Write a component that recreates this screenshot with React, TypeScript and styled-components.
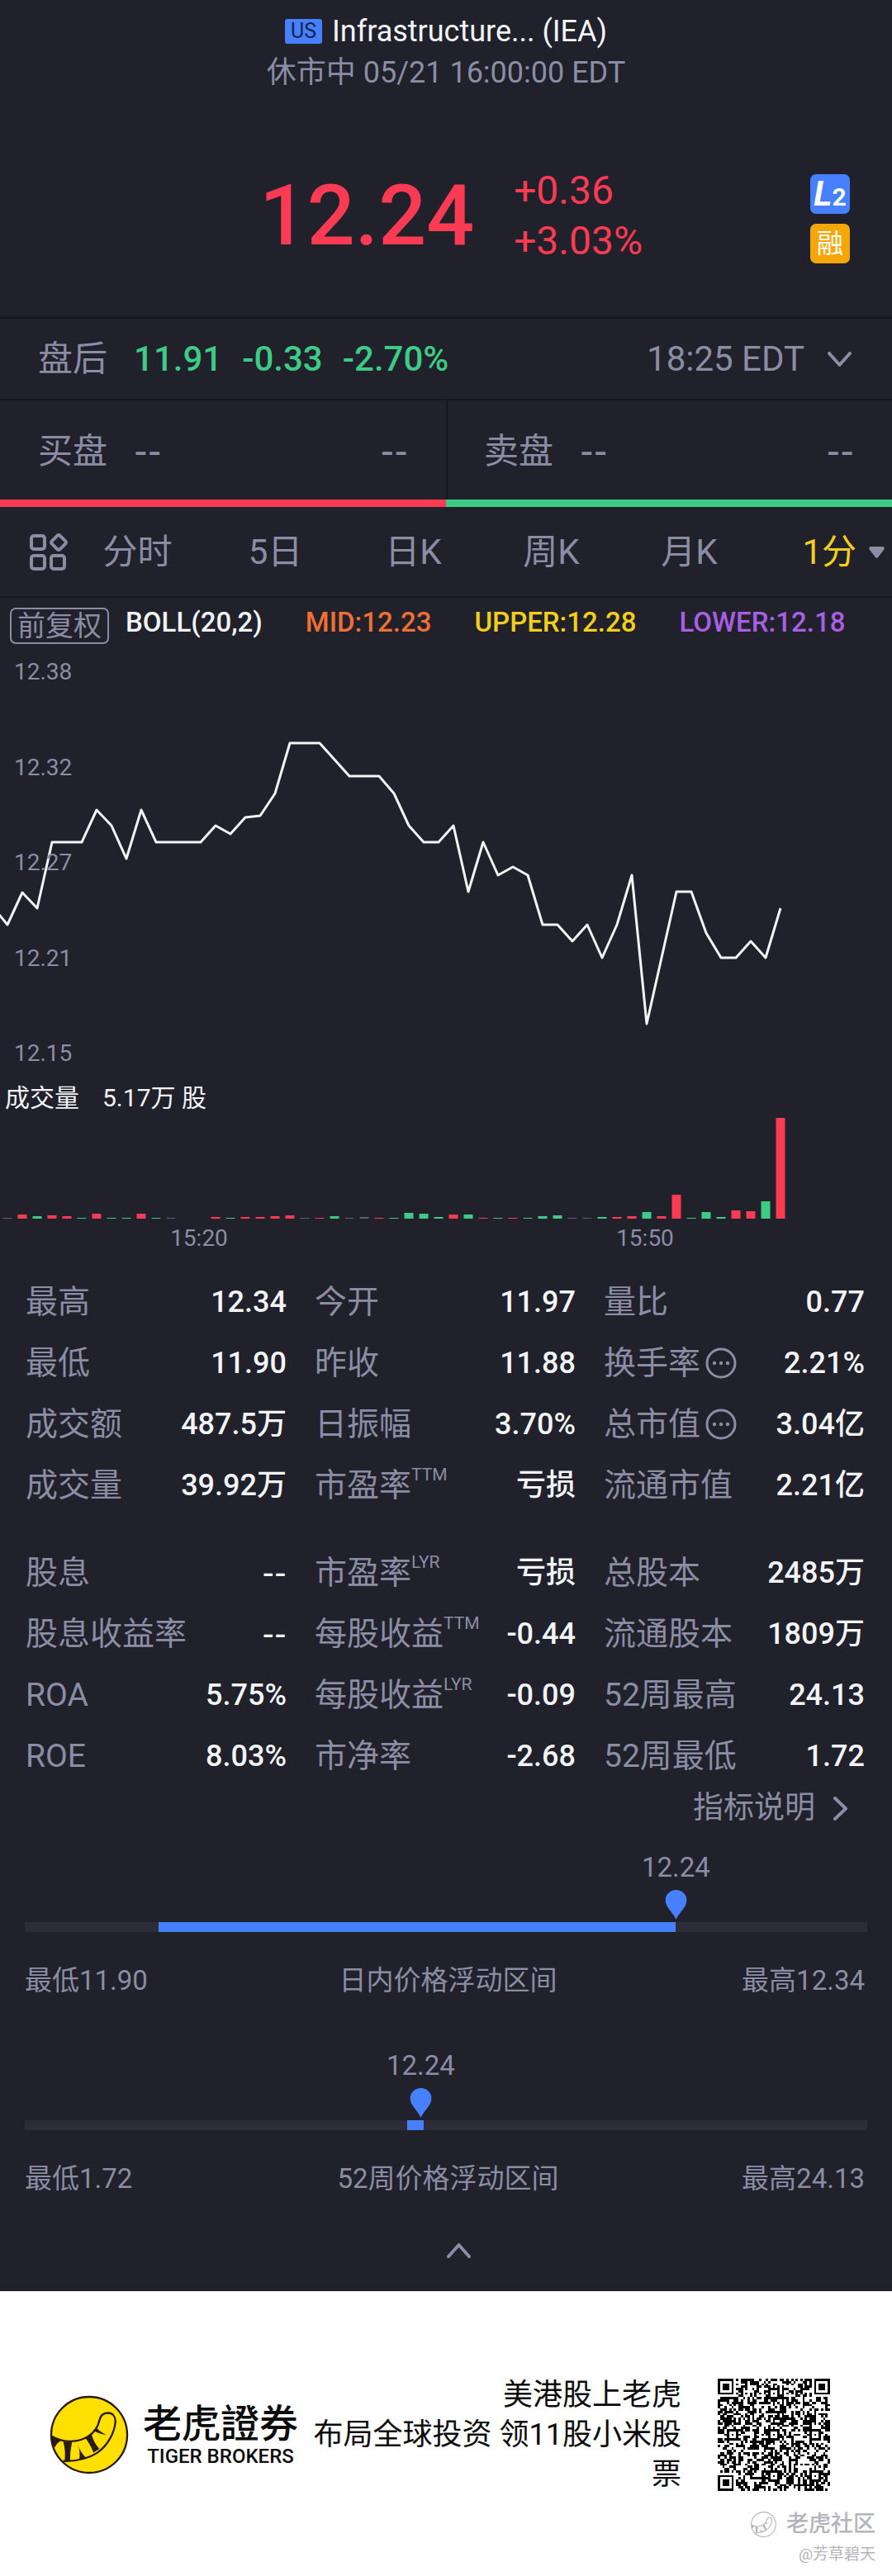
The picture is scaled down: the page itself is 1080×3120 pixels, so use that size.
import React from "react";
import styled, { createGlobalStyle } from "styled-components";

const c = {
  bg: "#20212a",
  line: "#15161e",
  muted: "#8b8da5",
  text: "#f3f4f8",
  red: "#fb3a53",
  green: "#3dcb86",
  blue: "#4680ff",
  amber: "#f5a70a",
  yellow: "#f2cf1d",
  orange: "#ee7034",
  purple: "#a95fe3",
  track: "#2c2d39",
};

const GlobalStyle = createGlobalStyle`
  *, *::before, *::after { box-sizing: border-box; }
  body {
    margin: 0;
    background: #fff;
    font-family: Roboto, "Noto Sans CJK SC", sans-serif;
  }
  button {
    margin: 0;
    padding: 0;
    border: 0;
    background: none;
    color: inherit;
    font: inherit;
    cursor: pointer;
  }
  svg { display: block; flex: none; }
  h1, p, dl, dd, dt { margin: 0; font-weight: inherit; }
`;

const Quote = styled.main`
  background: ${c.bg};
  color: ${c.muted};
`;

/* ---------- header ---------- */

const Header = styled.header`
  padding: 14px 0 62px;
  border-bottom: 2px solid ${c.line};
`;

const Title = styled.h1`
  display: flex;
  justify-content: center;
  align-items: center;
  gap: 12px;
  font-size: 36px;
  line-height: 48px;
  color: ${c.text};
`;

const Market = styled.span`
  width: 45px;
  border-radius: 3px;
  background: ${c.blue};
  color: #17234d;
  font-size: 25px;
  line-height: 30px;
  text-align: center;
`;

const Session = styled.p`
  margin-top: 2px;
  font-size: 36px;
  line-height: 48px;
  text-align: center;
`;

const PriceRow = styled.div`
  display: grid;
  grid-template-columns: 1fr auto 1fr;
  align-items: center;
  margin-top: 88px;
`;

const Price = styled.div`
  grid-column: 2;
  display: flex;
  align-items: center;
  gap: 48px;
  padding-left: 12px;
  color: ${c.red};
`;

const Last = styled.strong`
  font-size: 102px;
  line-height: 112px;
  font-weight: 500;
`;

const Change = styled.div`
  font-size: 48px;
  line-height: 61px;
`;

const Badges = styled.div`
  display: flex;
  flex-direction: column;
  align-items: flex-end;
  gap: 12px;
  padding: 8px 51px 0 0;
`;

const Badge = styled.button<{ $color: string }>`
  display: flex;
  justify-content: center;
  align-items: baseline;
  width: 48px;
  height: 48px;
  border-radius: 7px;
  background: ${(p) => p.$color};
  color: #fff;
  font-size: 32px;
  line-height: 48px;
`;

const BigL = styled.b`
  font-size: 42px;
  font-style: italic;
`;

const SmallTwo = styled.b`
  font-size: 30px;
`;

/* ---------- quote rows ---------- */

const AfterHours = styled.button`
  display: flex;
  align-items: center;
  width: 100%;
  height: 99px;
  padding: 0 49px 0 46px;
  border-bottom: 2px solid ${c.line};
  font-size: 42px;
  line-height: 56px;
`;

const AfterFigures = styled.span`
  display: flex;
  gap: 24px;
  margin-left: 32px;
  color: ${c.green};
  font-weight: 500;
`;

const AfterTime = styled.span`
  display: flex;
  align-items: center;
  gap: 28px;
  margin-left: auto;
`;

const Depth = styled.section`
  display: grid;
  grid-template-columns: 1fr 1fr;
`;

const DepthSide = styled.div<{ $color: string }>`
  display: flex;
  align-items: center;
  height: 129px;
  padding: 4px 46px 0;
  border-bottom: 9px solid ${(p) => p.$color};
  font-size: 42px;
  line-height: 56px;

  & + & {
    box-shadow: inset 2px 0 ${c.line};
  }
`;

const Dashes = styled.span`
  font-family: Inter, sans-serif;
  font-size: 36px;
  font-weight: 600;
  margin-left: 32px;

  & + & {
    margin-left: auto;
  }
`;

/* ---------- period tabs ---------- */

const Tabs = styled.nav`
  display: flex;
  align-items: center;
  height: 110px;
  padding-top: 2px;
  border-bottom: 2px solid ${c.line};
`;

const LayoutButton = styled.button`
  width: 83px;
  padding-left: 36px;
`;

const Tab = styled.button<{ $active?: boolean }>`
  flex: ${(p) => (p.$active ? "0 0 162px" : "1")};
  display: flex;
  justify-content: ${(p) => (p.$active ? "flex-end" : "center")};
  align-items: center;
  gap: 15px;
  padding-right: ${(p) => (p.$active ? 9 : 0)}px;
  color: ${(p) => (p.$active ? c.yellow : c.muted)};
  font-size: 42px;
  line-height: 56px;
`;

/* ---------- chart ---------- */

const Legend = styled.div`
  display: flex;
  align-items: flex-start;
  gap: 52px;
  padding: 12px 12px 0;
  font-size: 33px;
  line-height: 35px;
  font-weight: 500;
`;

const LegendLead = styled.span`
  display: flex;
  gap: 20px;
  color: ${c.text};
`;

const Adjust = styled.button`
  padding: 0 7px;
  border: 2px solid ${c.muted};
  border-radius: 7px;
  color: ${c.muted};
  font-size: 34px;
  font-weight: 400;
  line-height: 40px;
`;

const LegendItem = styled.span<{ $color: string }>`
  color: ${(p) => p.$color};
`;

const Plot = styled.div`
  position: relative;
  height: 514px;
`;

const PriceLine = styled.svg`
  width: 100%;
  height: 100%;
`;

const Scale = styled.div`
  position: absolute;
  inset: 0 auto 0 17px;
  display: flex;
  flex-direction: column;
  justify-content: space-between;
  padding: 16px 0 0;
  font-size: 28px;
  line-height: 36px;
`;

const VolumeTitle = styled.p`
  display: flex;
  gap: 28px;
  padding: 18px 6px 2px;
  color: ${c.text};
  font-size: 30px;
  line-height: 36px;
`;

const VolumeBars = styled.svg`
  width: 100%;
  height: 126px;
`;

const TimeAxis = styled.div`
  display: grid;
  grid-template-columns: 482fr 598fr;
  padding-top: 6px;
  font-size: 28px;
  line-height: 36px;
  text-align: center;
`;

/* ---------- indicators ---------- */

const StatsArea = styled.section`
  padding-top: 22px;
`;

const Stats = styled.dl`
  display: grid;
  grid-template-columns: repeat(3, 1fr);
  column-gap: 34px;
  padding: 0 33px 0 31px;

  & + & {
    margin-top: 32px;
  }
`;

const Stat = styled.div`
  display: flex;
  justify-content: space-between;
  align-items: center;
  height: 74px;
  white-space: nowrap;
`;

const StatName = styled.dt`
  display: flex;
  align-items: center;
  gap: 6px;
  font-size: 39px;
  line-height: 56px;
`;

const StatValue = styled.dd`
  color: ${c.text};
  font-size: 36px;
  line-height: 56px;
  font-weight: 500;
`;

const ValueDashes = styled(Dashes)`
  margin: 0;
  font-size: 32px;
`;

const Sup = styled.sup`
  align-self: flex-start;
  margin-left: -6px;
  font-size: 21px;
  line-height: 30px;
`;

const Explain = styled.button`
  display: flex;
  align-items: center;
  gap: 22px;
  margin: 0 53px 0 auto;
  font-size: 37px;
  line-height: 52px;
`;

/* ---------- ranges ---------- */

const Range = styled.section`
  padding: 112px 30px 0;

  & + & {
    padding-top: 145px;
  }
`;

const Track = styled.div`
  position: relative;
  height: 12px;
  background: ${c.track};
`;

const Fill = styled.div`
  height: 100%;
  background: ${c.blue};
`;

const Marker = styled.div`
  position: absolute;
  bottom: 15px;
  display: flex;
  flex-direction: column;
  align-items: center;
  gap: 7px;
  transform: translateX(-50%);
  font-size: 33px;
  line-height: 40px;
`;

const RangeText = styled.div`
  display: flex;
  justify-content: space-between;
  padding: 35px 3px 0 0;
  font-size: 33px;
  line-height: 48px;
`;

const RangeEnd = styled.span`
  flex: 1;

  &:last-child {
    text-align: right;
  }
`;

const RangeName = styled.span`
  padding-left: 8px;
`;

const Collapse = styled.button`
  display: block;
  margin: 0 auto;
  padding: 54px 0 40px 30px;
`;

/* ---------- footer ---------- */

const Footer = styled.footer`
  padding: 102px 0 12px;
  background: #fff;
  color: #0c0c0c;
`;

const Promo = styled.div`
  display: flex;
  align-items: center;
  padding: 0 75px 0 60px;
`;

const Brand = styled.div`
  margin-left: 17px;
  font-family: Roboto, "Noto Sans CJK TC", sans-serif;
  font-size: 47px;
  line-height: 52px;
  font-weight: 500;
  text-align: center;
  white-space: nowrap;
`;

const BrandLatin = styled.div`
  font-size: 24px;
  line-height: 26px;
`;

const Slogan = styled.p`
  flex: 1;
  margin-right: 44px;
  font-size: 36px;
  line-height: 48px;
  text-align: right;
  white-space: nowrap;
`;

const Watermark = styled.div`
  display: flex;
  flex-direction: column;
  align-items: flex-end;
  gap: 6px;
  padding: 18px 20px 0 0;
  color: #b4b4ba;
  font-size: 19px;
  line-height: 26px;
`;

const Community = styled.div`
  display: flex;
  align-items: center;
  gap: 12px;
  font-size: 27px;
  line-height: 36px;
  font-weight: 500;
`;

/* ---------- data ---------- */

const STEP = 18;
const OFFSET = 9;

const closes = [
  340, 301, 320, 240, 240, 240, 201, 220, 260, 201, 240, 240, 240, 240, 220,
  230, 210, 208, 181, 120, 120, 120, 140, 160, 160, 160, 181, 220, 240, 240,
  220, 300, 240, 280, 270, 280, 340, 340, 360, 340, 380, 340, 280, 460, 380,
  300, 300, 350, 380, 380, 360, 380, 320,
];

const volumes =
  "n1 r5 g3 r4 r3 g1 r6 g1 g1 r6 g1 n1 n0 n0 r2 g1 r2 r2 r3 r4 n1 r1 g3 n1 n2 r1 g1 g7 g6 g2 r5 g5 r1 g1 r1 g1 g3 g4 n1 n1 g2 r2 r3 g8 r3 r29 g1 g8 g2 r10 r9 g21 r122"
    .split(" ")
    .map((v) => ({ tone: v[0], size: Number(v.slice(1)) }));

const tones: Record<string, string> = { r: c.red, g: c.green, n: "#5c5e70" };

type Item = { name: string; value: string; sup?: string; info?: boolean };

const daily: Item[] = [
  { name: "最高", value: "12.34" },
  { name: "今开", value: "11.97" },
  { name: "量比", value: "0.77" },
  { name: "最低", value: "11.90" },
  { name: "昨收", value: "11.88" },
  { name: "换手率", value: "2.21%", info: true },
  { name: "成交额", value: "487.5万" },
  { name: "日振幅", value: "3.70%" },
  { name: "总市值", value: "3.04亿", info: true },
  { name: "成交量", value: "39.92万" },
  { name: "市盈率", value: "亏损", sup: "TTM" },
  { name: "流通市值", value: "2.21亿" },
];

const fundamentals: Item[] = [
  { name: "股息", value: "--" },
  { name: "市盈率", value: "亏损", sup: "LYR" },
  { name: "总股本", value: "2485万" },
  { name: "股息收益率", value: "--" },
  { name: "每股收益", value: "-0.44", sup: "TTM" },
  { name: "流通股本", value: "1809万" },
  { name: "ROA", value: "5.75%" },
  { name: "每股收益", value: "-0.09", sup: "LYR" },
  { name: "52周最高", value: "24.13" },
  { name: "ROE", value: "8.03%" },
  { name: "市净率", value: "-2.68" },
  { name: "52周最低", value: "1.72" },
];

/* ---------- drawings ---------- */

const Chevron = ({ d, w, h }: { d: string; w: number; h: number }) => (
  <svg width={w} height={h} viewBox={`0 0 ${w} ${h}`} fill="none" stroke={c.muted} strokeWidth="4" strokeLinecap="round" strokeLinejoin="round" aria-hidden="true">
    <path d={d} />
  </svg>
);

const LayoutIcon = () => (
  <svg width="46" height="46" viewBox="0 0 46 46" fill="none" stroke={c.muted} strokeWidth="4" strokeLinejoin="round" aria-hidden="true">
    <rect x="2" y="3" width="16" height="16" rx="3" />
    <rect x="2" y="27" width="16" height="16" rx="3" />
    <rect x="26" y="27" width="16" height="16" rx="3" />
    <path d="M33.3 2.8 26.8 9.3a2.4 2.4 0 0 0 0 3.4l6.5 6.5a2.4 2.4 0 0 0 3.4 0l6.5-6.5a2.4 2.4 0 0 0 0-3.4l-6.5-6.5a2.4 2.4 0 0 0-3.4 0Z" />
  </svg>
);

const InfoIcon = () => (
  <svg width="38" height="38" viewBox="0 0 38 38" aria-hidden="true">
    <circle cx="19" cy="19" r="17" fill="none" stroke={c.muted} strokeWidth="3" />
    <g fill={c.muted}>
      <circle cx="11" cy="19" r="2.2" />
      <circle cx="19" cy="19" r="2.2" />
      <circle cx="27" cy="19" r="2.2" />
    </g>
  </svg>
);

const Pin = () => (
  <svg width="26" height="36" viewBox="0 0 26 36" aria-hidden="true">
    <path d="M13 36C10 28 0 21 0 12.5a13 12.5 0 0 1 26 0C26 21 16 28 13 36Z" fill={c.blue} />
  </svg>
);

const TigerLogo = ({ size, body, ink, stroke }: { size: number; body: string; ink: string; stroke: number }) => (
  <svg width={size} height={size} viewBox="58 54 290 290" aria-hidden="true">
    <circle cx="203" cy="199" r="139" fill={body} stroke={ink} strokeWidth={stroke} />
    <path
      d="M66 204C110 230 165 228 200 204C225 188 235 172 240 147C244 128 254 119 271 119C289 119 299 132 299 150C296 190 272 238 232 265C198 287 158 296 108 295"
      fill="none"
      stroke={ink}
      strokeWidth={stroke}
    />
    <g fill={ink}>
      <path d="M64 202L98 222Q84 230 77 246L66 228Z" />
      <path d="M108 224L140 226Q132 262 133 296L113 297Q118 258 108 224Z" />
      <path d="M162 236Q172 266 192 283L167 289Q171 262 162 236Z" />
      <path d="M189 211L212 198Q220 228 240 250L219 264Q206 232 189 211Z" />
      <path d="M217 184L228 172Q244 190 266 199Q246 197 217 184Z" />
    </g>
  </svg>
);

const QR_SIZE = 49;

function qrPath() {
  let seed = 20210521;
  const random = () => {
    seed = (seed * 1103515 + 12345) % 2147483647;
    return seed / 2147483647;
  };
  const last = QR_SIZE - 7;
  const squares = [
    { x: 0, y: 0, n: 7 },
    { x: last, y: 0, n: 7 },
    { x: 0, y: last, n: 7 },
    ...[[24, 6], [6, 24], [24, 24], [42, 24], [24, 42], [42, 42]].map(([x, y]) => ({ x: x - 2, y: y - 2, n: 5 })),
  ];
  const dark = (x: number, y: number) => {
    const noise = random() < 0.5;
    for (const s of squares) {
      const half = (s.n - 1) / 2;
      const ring = Math.max(Math.abs(x - s.x - half), Math.abs(y - s.y - half));
      if (s.n === 7 && ring <= 4) return ring === 3 || ring <= 1;
      if (s.n === 5 && ring <= 2) return ring !== 1;
    }
    if (x === 6 || y === 6) return (x + y) % 2 === 0;
    return noise;
  };
  let d = "";
  for (let y = 0; y < QR_SIZE; y++) {
    for (let x = 0; x < QR_SIZE; x++) {
      if (dark(x, y)) d += `M${x} ${y}h1v1h-1z`;
    }
  }
  return d;
}

const qr = qrPath();

/* ---------- parts ---------- */

const StatList = ({ items }: { items: Item[] }) => (
  <Stats>
    {items.map((item) => (
      <Stat key={item.name + (item.sup ?? "")}>
        <StatName>
          {item.name}
          {item.sup && <Sup>{item.sup}</Sup>}
          {item.info && <InfoIcon />}
        </StatName>
        <StatValue>{item.value === "--" ? <ValueDashes>--</ValueDashes> : item.value}</StatValue>
      </Stat>
    ))}
  </Stats>
);

type RangeProps = { from: number; to: number; at: number; low: string; label: string; high: string };

const PriceRange = ({ from, to, at, low, label, high }: RangeProps) => (
  <Range>
    <Track>
      <Fill style={{ marginLeft: `${from}%`, width: `${to - from}%` }} />
      <Marker style={{ left: `${at}%` }}>
        <span>12.24</span>
        <Pin />
      </Marker>
    </Track>
    <RangeText>
      <RangeEnd>{low}</RangeEnd>
      <RangeName>{label}</RangeName>
      <RangeEnd>{high}</RangeEnd>
    </RangeText>
  </Range>
);

export default function App() {
  const line = ["-9,318", ...closes.map((y, i) => `${OFFSET + STEP * i},${y}`)].join(" ");

  return (
    <>
      <GlobalStyle />
      <Quote>
        <Header>
          <Title>
            <Market>US</Market>
            Infrastructure... (IEA)
          </Title>
          <Session>休市中 05/21 16:00:00 EDT</Session>
          <PriceRow>
            <Price>
              <Last>12.24</Last>
              <Change>
                <div>+0.36</div>
                <div>+3.03%</div>
              </Change>
            </Price>
            <Badges>
              <Badge $color={c.blue}>
                <BigL>L</BigL>
                <SmallTwo>2</SmallTwo>
              </Badge>
              <Badge $color={c.amber}>融</Badge>
            </Badges>
          </PriceRow>
        </Header>

        <AfterHours>
          盘后
          <AfterFigures>
            <span>11.91</span>
            <span>-0.33</span>
            <span>-2.70%</span>
          </AfterFigures>
          <AfterTime>
            18:25 EDT
            <Chevron w={29} h={18} d="M2 2 14.5 16 27 2" />
          </AfterTime>
        </AfterHours>

        <Depth>
          <DepthSide $color={c.red}>
            买盘
            <Dashes>--</Dashes>
            <Dashes>--</Dashes>
          </DepthSide>
          <DepthSide $color={c.green}>
            卖盘
            <Dashes>--</Dashes>
            <Dashes>--</Dashes>
          </DepthSide>
        </Depth>

        <Tabs>
          <LayoutButton aria-label="布局">
            <LayoutIcon />
          </LayoutButton>
          {["分时", "5日", "日K", "周K", "月K"].map((t) => (
            <Tab key={t}>{t}</Tab>
          ))}
          <Tab $active>
            1分
            <svg width="19" height="14" viewBox="0 0 19 14" aria-hidden="true">
              <path d="M2 0h15q3 1 1 4l-7 9q-1.500 2-3 0L1 4Q-1 1 2 0Z" fill={c.muted} />
            </svg>
          </Tab>
        </Tabs>

        <Legend>
          <LegendLead>
            <Adjust>前复权</Adjust>
            BOLL(20,2)
          </LegendLead>
          <LegendItem $color={c.orange}>MID:12.23</LegendItem>
          <LegendItem $color={c.yellow}>UPPER:12.28</LegendItem>
          <LegendItem $color={c.purple}>LOWER:12.18</LegendItem>
        </Legend>

        <Plot>
          <Scale>
            {["12.38", "12.32", "12.27", "12.21", "12.15"].map((v) => (
              <span key={v}>{v}</span>
            ))}
          </Scale>
          <PriceLine viewBox="0 0 1080 514" preserveAspectRatio="none">
            <polyline points={line} fill="none" stroke="#f4f4f6" strokeWidth="3" strokeLinejoin="round" />
          </PriceLine>
        </Plot>

        <VolumeTitle>
          <span>成交量</span>
          <span>5.17万 股</span>
        </VolumeTitle>
        <VolumeBars viewBox="0 0 1080 126" preserveAspectRatio="none">
          {volumes.map((v, i) => (
            <rect key={i} x={OFFSET + STEP * i - 5.5} y={126 - v.size} width="11" height={v.size} fill={tones[v.tone]} />
          ))}
        </VolumeBars>
        <TimeAxis>
          <span>15:20</span>
          <span>15:50</span>
        </TimeAxis>

        <StatsArea>
          <StatList items={daily} />
          <StatList items={fundamentals} />
          <Explain>
            指标说明
            <Chevron w={18} h={29} d="M2 2 15 14.5 2 27" />
          </Explain>
        </StatsArea>

        <PriceRange from={15.9} to={77.3} at={77.3} low="最低11.90" label="日内价格浮动区间" high="最高12.34" />
        <PriceRange from={45.4} to={47.4} at={47} low="最低1.72" label="52周价格浮动区间" high="最高24.13" />

        <Collapse aria-label="收起">
          <Chevron w={29} h={18} d="M2 16 14.5 2 27 16" />
        </Collapse>
      </Quote>

      <Footer>
        <Promo>
          <TigerLogo size={96} body="#fde000" ink="#2a1a10" stroke={7} />
          <Brand>
            老虎證券
            <BrandLatin>TIGER BROKERS</BrandLatin>
          </Brand>
          <Slogan>
            美港股上老虎
            <br />
            布局全球投资 领11股小米股
            <br />票
          </Slogan>
          <svg width="136" height="136" viewBox={`0 0 ${QR_SIZE} ${QR_SIZE}`} shapeRendering="crispEdges" role="img" aria-label="二维码">
            <path d={qr} fill="#000" />
          </svg>
        </Promo>
        <Watermark>
          <Community>
            <TigerLogo size={31} body="#fff" ink="#b4b4ba" stroke={10} />
            老虎社区
          </Community>
          <span>@芳草碧天</span>
        </Watermark>
      </Footer>
    </>
  );
}
